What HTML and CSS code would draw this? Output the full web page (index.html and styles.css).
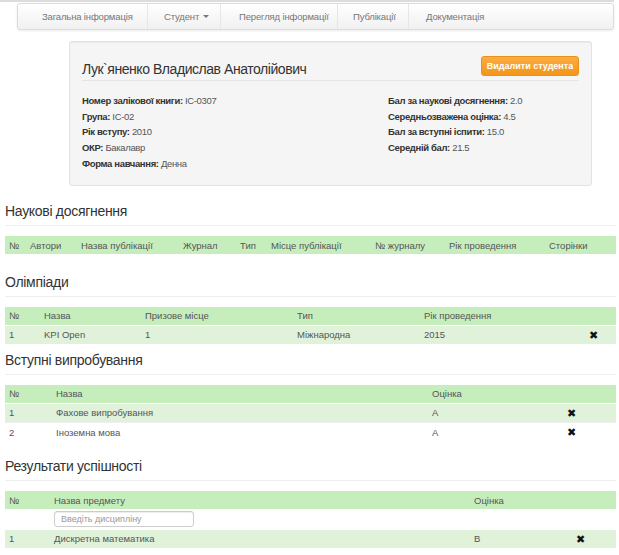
FILE: index.html
```html
<!DOCTYPE html>
<html lang="uk">
<head>
<meta charset="utf-8">
<link rel="stylesheet" href="styles.css">
</head>
<body>
<div class="topline"></div>
<nav class="navbar">
  <a class="nav-item">Загальна інформація</a>
  <a class="nav-item">Студент <span class="caret"></span></a>
  <a class="nav-item">Перегляд інформації</a>
  <a class="nav-item">Публікації</a>
  <a class="nav-item">Документація</a>
</nav>

<div class="well">
  <div class="well-head">
    <h1 class="student-name">Лук`яненко Владислав Анатолійович</h1>
    <button class="btn-warning">Видалити студента</button>
  </div>
  <div class="info">
    <div class="info-col left">
      <p><b>Номер залікової книги:</b> ІС-0307</p>
      <p><b>Група:</b> ІС-02</p>
      <p><b>Рік вступу:</b> 2010</p>
      <p><b>ОКР:</b> Бакалавр</p>
      <p><b>Форма навчання:</b> Денна</p>
    </div>
    <div class="info-col right">
      <p><b>Бал за наукові досягнення:</b> 2.0</p>
      <p><b>Середньозважена оцінка:</b> 4.5</p>
      <p><b>Бал за вступні іспити:</b> 15.0</p>
      <p><b>Середній бал:</b> 21.5</p>
    </div>
  </div>
</div>

<h2 class="section-title s1">Наукові досягнення</h2>
<table class="tbl">
  <colgroup><col style="width:21px"><col style="width:51px"><col style="width:102px"><col style="width:57px"><col style="width:31px"><col style="width:104px"><col style="width:74px"><col style="width:100px"><col></colgroup>
  <tr class="th"><td>№</td><td>Автори</td><td>Назва публікації</td><td>Журнал</td><td>Тип</td><td>Місце публікації</td><td>№ журналу</td><td>Рік проведення</td><td>Сторінки</td></tr>
</table>

<h2 class="section-title s2">Олімпіади</h2>
<table class="tbl">
  <colgroup><col style="width:35px"><col style="width:101px"><col style="width:152px"><col style="width:127px"><col style="width:165px"><col></colgroup>
  <tr class="th"><td>№</td><td>Назва</td><td>Призове місце</td><td>Тип</td><td>Рік проведення</td><td></td></tr>
  <tr class="tr-success"><td>1</td><td>KPI Open</td><td>1</td><td>Міжнародна</td><td>2015</td><td class="x">✖</td></tr>
</table>

<h2 class="section-title s3">Вступні випробування</h2>
<table class="tbl">
  <colgroup><col style="width:47px"><col style="width:376px"><col style="width:135px"><col></colgroup>
  <tr class="th"><td>№</td><td>Назва</td><td>Оцінка</td><td></td></tr>
  <tr class="tr-success"><td>1</td><td>Фахове випробування</td><td>A</td><td class="x">✖</td></tr>
  <tr class="tr-plain"><td>2</td><td>Іноземна мова</td><td>A</td><td class="x">✖</td></tr>
</table>

<h2 class="section-title s4">Результати успішності</h2>
<table class="tbl">
  <colgroup><col style="width:45px"><col style="width:420px"><col style="width:102px"><col></colgroup>
  <tr class="th"><td>№</td><td>Назва предмету</td><td>Оцінка</td><td></td></tr>
  <tr class="tr-input"><td></td><td><input class="search" type="text" placeholder="Введіть дисципліну"></td><td></td><td></td></tr>
  <tr class="tr-success"><td>1</td><td>Дискретна математика</td><td>B</td><td class="x">✖</td></tr>
</table>
</body>
</html>
```
FILE: styles.css
```css
* { box-sizing: border-box; }
html, body { margin: 0; padding: 0; background: #fff; }
body {
  font-family: "Liberation Sans", Arial, sans-serif;
  color: #333;
  font-size: 10px;
}
.topline {
  height: 2px;
  background: #dcdcdc;
  margin-right: 5px;
}
.navbar {
  display: flex;
  height: 27px;
  margin: 1px 5px 0 17px;
  border: 1px solid #dcdcdc;
  border-radius: 3px;
  background: linear-gradient(#ffffff, #f1f1f1);
  box-shadow: 0 1px 3px rgba(0,0,0,0.08);
}
.nav-item {
  display: flex;
  align-items: center;
  white-space: nowrap;
  border-right: 1px solid #e6e6e6;
  color: #777;
  font-size: 9.5px;
  letter-spacing: -0.15px;
}
.nav-item:nth-child(1) { width: 130px; padding-left: 24px; }
.nav-item:nth-child(2) { width: 73px; padding-left: 16px; }
.nav-item:nth-child(3) { width: 117px; padding-left: 18px; }
.nav-item:nth-child(4) { width: 71px; padding-left: 15px; }
.nav-item:nth-child(5) { border-right: none; padding-left: 17px; }
.caret {
  display: inline-block;
  width: 0; height: 0;
  margin-left: 4px;
  border-left: 3px solid transparent;
  border-right: 3px solid transparent;
  border-top: 3px solid #777;
}
.well {
  margin: 11px 0 0 69px;
  width: 523px;
  height: 145px;
  background: #f5f5f5;
  border: 1px solid #e3e3e3;
  border-radius: 3px;
  padding: 12px 12px 0 12px;
  box-shadow: inset 0 1px 1px rgba(0,0,0,0.05);
}
.well-head {
  display: flex;
  justify-content: space-between;
  align-items: center;
  height: 27px;
  border-bottom: 1px solid #e5e5e5;
  margin-bottom: 12px;
}
.student-name {
  margin: 4px 0 0 0;
  font-size: 14px;
  letter-spacing: -0.45px;
  font-weight: normal;
  color: #333;
}
.btn-warning {
  height: 20px;
  width: 98px;
  padding: 0;
  margin-top: -2px;
  border: 1px solid #e8921a;
  border-radius: 3px;
  background: linear-gradient(#fbab45, #f29518);
  color: #fff;
  font-family: "Liberation Sans", Arial, sans-serif;
  font-size: 9px;
  font-weight: bold;
}
.info { display: flex; }
.info-col.left { width: 306px; }
.info p {
  margin: 0;
  height: 15.7px;
  line-height: 15.7px;
  font-size: 9.5px;
  letter-spacing: -0.35px;
  color: #555;
}
.info b { color: #333; }
.section-title {
  margin: 18px 3px 10px 5px;
  padding-bottom: 4px;
  border-bottom: 1px solid #eee;
  font-size: 14px;
  letter-spacing: -0.3px;
  line-height: 20px;
  font-weight: normal;
  color: #333;
}
.section-title.s1 { margin-top: 15px; }
.section-title.s2 { margin-top: 18px; }
.section-title.s3 { margin-top: 6px; }
.section-title.s4 { margin-top: 14px; }
.tbl {
  margin-left: 5px;
  width: 611px;
  border-collapse: collapse;
  table-layout: fixed;
}
.tbl td {
  padding: 0 0 0 4px;
  font-size: 9.5px;
  color: #555;
  white-space: nowrap;
  overflow: hidden;
}
.tbl .th td { height: 18px; background: #c6eebd; }
.tbl .tr-success td { height: 19px; background: #e0f2d9; border-top: 1px solid #fff; }
.tbl .tr-plain td { height: 20px; border-top: 1px solid #eee; }
.tbl .tr-input td { height: 20px; }
.tbl td.x { font-size: 10.5px; color: #111; padding-left: 4px; }
.search {
  width: 140px;
  height: 16px;
  border: 1px solid #ccc;
  border-radius: 3px;
  padding: 0 6px;
  font-family: "Liberation Sans", Arial, sans-serif;
  font-size: 9px;
  box-shadow: inset 0 1px 1px rgba(0,0,0,0.075);
}
.search::placeholder { color: #999; }
```
